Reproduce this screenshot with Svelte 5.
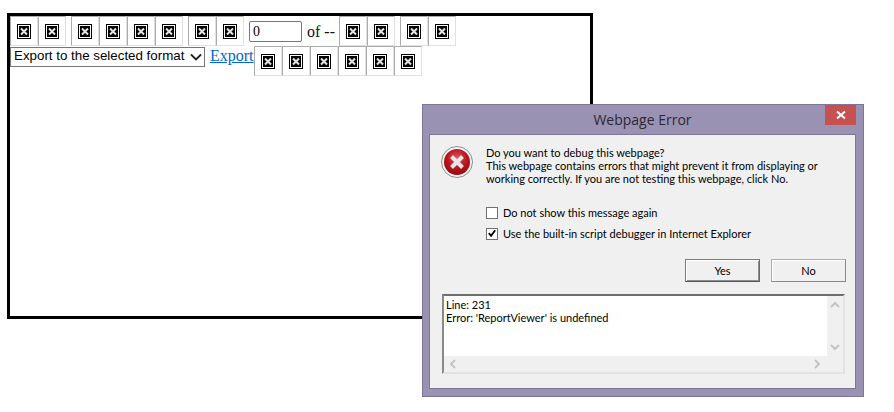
<script>
  const groupA = [0, 1];
  const groupB = [0, 1, 2, 3];
  const groupC = [0, 1];
  const groupD = [0, 1];
  const groupE = [0, 1];
  const groupF = [0, 1, 2, 3, 4, 5];
</script>

{#snippet tool()}
  <span class="tool">
    <svg width="14" height="15" viewBox="0 0 14 15">
      <rect x="0" y="0" width="14" height="15" fill="#000" />
      <rect x="1" y="1" width="12" height="13" fill="#fff" />
      <rect x="2" y="2" width="10" height="11" fill="#000" />
      <path d="M4 4.5 L10 10.5 M10 4.5 L4 10.5" stroke="#e4e4e4" stroke-width="2" />
    </svg>
  </span>
{/snippet}

<div class="page">
  <div class="frame">
    <div class="toolbar">
      <div class="group">{#each groupA as _}{@render tool()}{/each}</div>
      <div class="group">{#each groupB as _}{@render tool()}{/each}</div>
      <div class="group">{#each groupC as _}{@render tool()}{/each}</div>
      <div class="pager">
        <input class="page-input" type="text" value="0" />
        <span class="of">of --</span>
      </div>
      <div class="group">{#each groupD as _}{@render tool()}{/each}</div>
      <div class="group">{#each groupE as _}{@render tool()}{/each}</div>
    </div>
    <div class="row2">
      <div class="select-wrap">
        <select class="format"><option>Export to the selected format</option></select>
        <svg class="chevron" width="12" height="8" viewBox="0 0 12 8"><path d="M1 1.5 L6 6.5 L11 1.5" fill="none" stroke="#222" stroke-width="1.8" /></svg>
      </div>
      <a class="export" href="#export">Export</a>
      <div class="group">{#each groupF as _}{@render tool()}{/each}</div>
    </div>
  </div>

  <div class="dialog">
    <div class="titlebar">
      <span class="title">Webpage Error</span>
      <span class="close">
        <svg width="10" height="10" viewBox="0 0 10 10"><path d="M1 1.5 L9 8.5 M9 1.5 L1 8.5" stroke="#fff" stroke-width="2" /></svg>
      </span>
    </div>
    <div class="body">
      <div class="message">
        <svg class="erricon" width="32" height="32" viewBox="0 0 32 32">
          <defs>
            <radialGradient id="red" cx="50%" cy="35%" r="70%">
              <stop offset="0%" stop-color="#e0555f" />
              <stop offset="55%" stop-color="#b8141c" />
              <stop offset="100%" stop-color="#8c0a10" />
            </radialGradient>
          </defs>
          <circle cx="16" cy="16" r="15.5" fill="#f4f4f4" stroke="#8e8e8e" />
          <circle cx="16" cy="16" r="13" fill="url(#red)" />
          <path d="M10.5 10.5 L21.5 21.5 M21.5 10.5 L10.5 21.5" stroke="#e6e6e6" stroke-width="4" />
        </svg>
        <p>Do you want to debug this webpage?<br />This webpage contains errors that might prevent it from displaying or<br />working correctly. If you are not testing this webpage, click No.</p>
      </div>
      <div class="checks">
        <div class="check"><span class="box"></span>Do not show this message again</div>
        <div class="check">
          <span class="box"><svg width="11" height="11" viewBox="0 0 11 11"><path d="M2 5 L4.5 8 L9 2" fill="none" stroke="#000" stroke-width="2" /></svg></span>
          Use the built-in script debugger in Internet Explorer
        </div>
      </div>
      <div class="actions">
        <span class="btn primary">Yes</span>
        <span class="btn">No</span>
      </div>
      <div class="details">
        <div class="details-main">
          <div class="details-text">Line: 231<br />Error: 'ReportViewer' is undefined</div>
          <div class="vbar">
            <svg width="10" height="7" viewBox="0 0 10 7"><path d="M1 6 L5 2 L9 6" fill="none" stroke="#c4c4c4" stroke-width="2" /></svg>
            <svg width="10" height="7" viewBox="0 0 10 7"><path d="M1 1 L5 5 L9 1" fill="none" stroke="#c4c4c4" stroke-width="2" /></svg>
          </div>
        </div>
        <div class="hbar">
          <svg width="7" height="10" viewBox="0 0 7 10"><path d="M6 1 L2 5 L6 9" fill="none" stroke="#c4c4c4" stroke-width="2" /></svg>
          <svg width="7" height="10" viewBox="0 0 7 10"><path d="M1 1 L5 5 L1 9" fill="none" stroke="#c4c4c4" stroke-width="2" /></svg>
        </div>
      </div>
    </div>
  </div>
</div>

<style>
  :global(body) {
    margin: 0;
    background: #fff;
  }
  .page {
    position: relative;
    width: 894px;
    height: 412px;
    overflow: hidden;
    padding: 13px 0 0 7px;
    box-sizing: border-box;
  }
  .frame {
    width: 586px;
    height: 306px;
    box-sizing: border-box;
    border: 3px solid #000;
    font-family: "Liberation Serif", serif;
    font-size: 16px;
  }
  .toolbar {
    display: flex;
    gap: 5px;
    height: 30px;
  }
  .group {
    display: flex;
  }
  .tool {
    width: 28px;
    height: 30px;
    box-sizing: border-box;
    border: 1px solid;
    border-color: #ababab #e0e0e0 #e0e0e0 #ababab;
    display: flex;
    padding: 7px 0 0 6px;
  }
  .pager {
    display: flex;
    align-items: flex-start;
    gap: 5px;
    padding-top: 5px;
    margin-right: -1px;
  }
  .page-input {
    width: 53px;
    height: 21px;
    box-sizing: border-box;
    border: 1px solid #767676;
    border-radius: 2px;
    padding: 0 3px;
    margin: 0;
    font: 14px "Liberation Serif", serif;
    color: #000;
  }
  .of {
    line-height: 21px;
    color: #111;
  }
  .row2 {
    display: flex;
    align-items: flex-start;
  }
  .select-wrap {
    position: relative;
    width: 195px;
    height: 20px;
    margin-top: 1px;
    flex: none;
  }
  .format {
    appearance: none;
    display: block;
    width: 195px;
    height: 20px;
    margin: 0;
    padding: 0 0 3px 3px;
    box-sizing: border-box;
    border: 1px solid #767676;
    border-radius: 0;
    background: #fff;
    color: #000;
    font: 13.33px "Liberation Sans", sans-serif;
  }
  .chevron {
    position: absolute;
    right: 3px;
    top: 6px;
    pointer-events: none;
  }
  .export {
    margin-left: 5px;
    color: #0066cc;
    line-height: 20px;
    width: 44px;
    flex: none;
    white-space: nowrap;
  }
  .dialog {
    position: absolute;
    left: 422px;
    top: 104px;
    width: 442px;
    height: 293px;
    box-sizing: border-box;
    background: #9a92b3;
    border: 1px solid #7d7699;
    padding: 0 7px 7px 6px;
    display: flex;
    flex-direction: column;
    font-family: "Lato", sans-serif;
    color: #000;
  }
  .titlebar {
    height: 29px;
    flex: none;
    display: flex;
    align-items: center;
    justify-content: center;
    position: relative;
  }
  .title {
    font: 14px "Open Sans", sans-serif;
    color: #2c2833;
  }
  .close {
    position: absolute;
    right: 0;
    top: 0;
    width: 31px;
    height: 20px;
    background: #c75050;
    display: flex;
    align-items: center;
    justify-content: center;
  }
  .body {
    flex: 1;
    background: #f0f0f0;
    border: 1px solid #7d7699;
    display: flex;
    flex-direction: column;
    padding: 11px 10px 14px 11px;
    font-size: 11px;
    line-height: 13px;
    min-height: 0;
  }
  .message {
    display: flex;
    gap: 13px;
  }
  .erricon {
    flex: none;
  }
  .message p {
    margin: 0;
    white-space: nowrap;
  }
  .checks {
    margin: 21px 0 0 45px;
    display: flex;
    flex-direction: column;
    gap: 8px;
  }
  .check {
    display: flex;
    align-items: center;
    gap: 5px;
    height: 13px;
  }
  .box {
    width: 12px;
    height: 12px;
    box-sizing: border-box;
    border: 1px solid #707070;
    background: #fff;
    display: flex;
    align-items: center;
    justify-content: center;
  }
  .actions {
    display: flex;
    justify-content: flex-end;
    gap: 11px;
    margin: 19px -1px 0 0;
  }
  .btn {
    width: 75px;
    height: 23px;
    box-sizing: border-box;
    border: 1px solid;
    border-color: #adadad #8a8a8a #8a8a8a #adadad;
    box-shadow: inset 1px 1px 0 #fff;
    display: flex;
    align-items: center;
    justify-content: center;
  }
  .primary {
    border-color: #7c7c7c #6a6a6a #555 #7c7c7c;
    box-shadow: inset 1px 1px 0 #fff, inset -1px -1px 0 #8f8f8f;
  }
  .details {
    margin: 12px 0 0 1px;
    height: 80px;
    box-sizing: border-box;
    border: 2px solid;
    border-color: #6e6e6e #e2e2e2 #e2e2e2 #8a8a8a;
    display: flex;
    flex-direction: column;
  }
  .details-main {
    flex: 1;
    display: flex;
    min-height: 0;
  }
  .details-text {
    flex: 1;
    background: #fff;
    padding: 2px 2px;
  }
  .vbar {
    width: 16px;
    display: flex;
    flex-direction: column;
    justify-content: space-between;
    align-items: center;
    padding: 5px 0;
  }
  .hbar {
    height: 16px;
    flex: none;
    display: flex;
    justify-content: space-between;
    align-items: center;
    padding: 0 22px 0 5px;
  }
</style>
